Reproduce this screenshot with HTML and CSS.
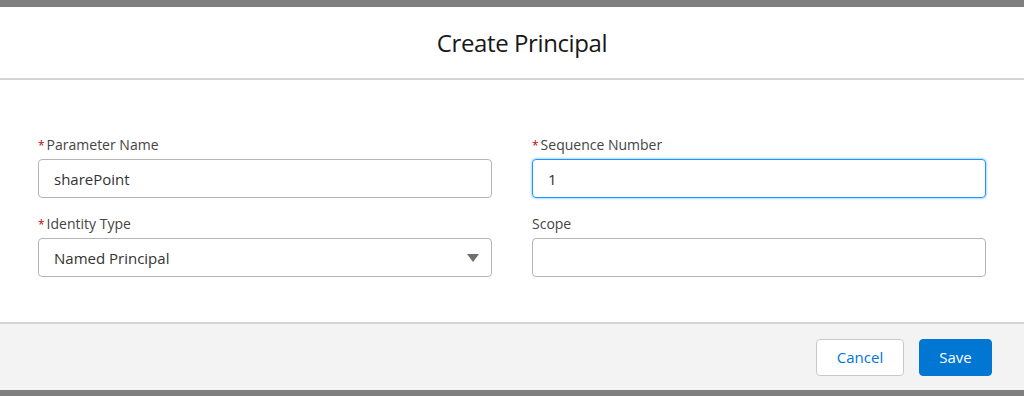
FILE: index.html
```html
<!DOCTYPE html>
<html lang="en">
<head>
  <meta charset="UTF-8" />
  <title>Create Principal</title>
  <link rel="stylesheet" href="styles.css">
</head>
<body>
  <div class="modal">
    <!-- Header -->
    <div class="modal-header">
      <h2>Create Principal</h2>
    </div>

    <!-- Form -->
    <div class="modal-body">
      <div class="form-grid">
        <div class="field">
          <label><abbr class="required">*</abbr>Parameter Name</label>
          <div class="input">sharePoint</div>
        </div>
        <div class="field">
          <label><abbr class="required">*</abbr>Sequence Number</label>
          <div class="input focused">1</div>
        </div>
        <div class="field">
          <label><abbr class="required">*</abbr>Identity Type</label>
          <div class="input select">
            <span>Named Principal</span>
            <svg class="caret" width="12" height="8" viewBox="0 0 12 8"><path d="M0 0 L12 0 L6 8 Z" fill="#706e6b"/></svg>
          </div>
        </div>
        <div class="field">
          <label>Scope</label>
          <div class="input"></div>
        </div>
      </div>
    </div>

    <!-- Footer -->
    <div class="modal-footer">
      <button class="btn btn-neutral">Cancel</button>
      <button class="btn btn-brand">Save</button>
    </div>
  </div>
</body>
</html>
```

FILE: styles.css
```css
* {
  margin: 0;
  padding: 0;
  box-sizing: border-box;
}

body {
  font-family: 'Open Sans', 'Noto Sans', sans-serif;
  background-color: #7f7f7f;
  color: #181818;
  height: 396px;
  overflow: hidden;
}

.modal {
  margin-top: 7px;
  background: #fff;
}

/* Header */
.modal-header {
  height: 73px;
  border-bottom: 2px solid #d4d4d4;
  display: flex;
  align-items: center;
  justify-content: center;
  padding-left: 20px;
}
.modal-header h2 {
  font-size: 24px;
  font-weight: 400;
  color: #181818;
  letter-spacing: -0.4px;
}

/* Body */
.modal-body {
  padding: 55px 38px 45px;
}
.form-grid {
  display: grid;
  grid-template-columns: 1fr 1fr;
  column-gap: 40px;
  row-gap: 16px;
}
.field label {
  display: block;
  height: 20px;
  font-size: 14px;
  line-height: 20px;
  color: #444;
  margin-bottom: 4px;
}
.required {
  color: #ba0517;
  text-decoration: none;
  font-size: 12px;
  line-height: 1;
  margin-right: 2px;
}
.input {
  height: 39px;
  border: 1px solid #b5b5b5;
  border-radius: 4px;
  padding: 0 15px;
  display: flex;
  align-items: center;
  font-size: 15px;
  color: #333;
}
.input.focused {
  border-color: #1b96ff;
  box-shadow: 0 0 3px #5eb4ff;
}
.input.select {
  justify-content: space-between;
  padding-right: 12px;
}

/* Footer */
.modal-footer {
  height: 68px;
  border-top: 2px solid #d4d4d4;
  background-color: #f3f3f3;
  display: flex;
  align-items: center;
  justify-content: flex-end;
  gap: 15px;
  padding-right: 32px;
}
.btn {
  font-family: 'Open Sans', 'Noto Sans', sans-serif;
  font-size: 15px;
  height: 37px;
  border-radius: 4px;
  padding: 0 16px;
  cursor: pointer;
}
.btn-neutral {
  width: 88px;
  background: #fff;
  border: 1px solid #c9c9c9;
  color: #0176d3;
}
.btn-brand {
  width: 73px;
  background: #0176d3;
  border: 1px solid #0176d3;
  color: #fff;
}
```
